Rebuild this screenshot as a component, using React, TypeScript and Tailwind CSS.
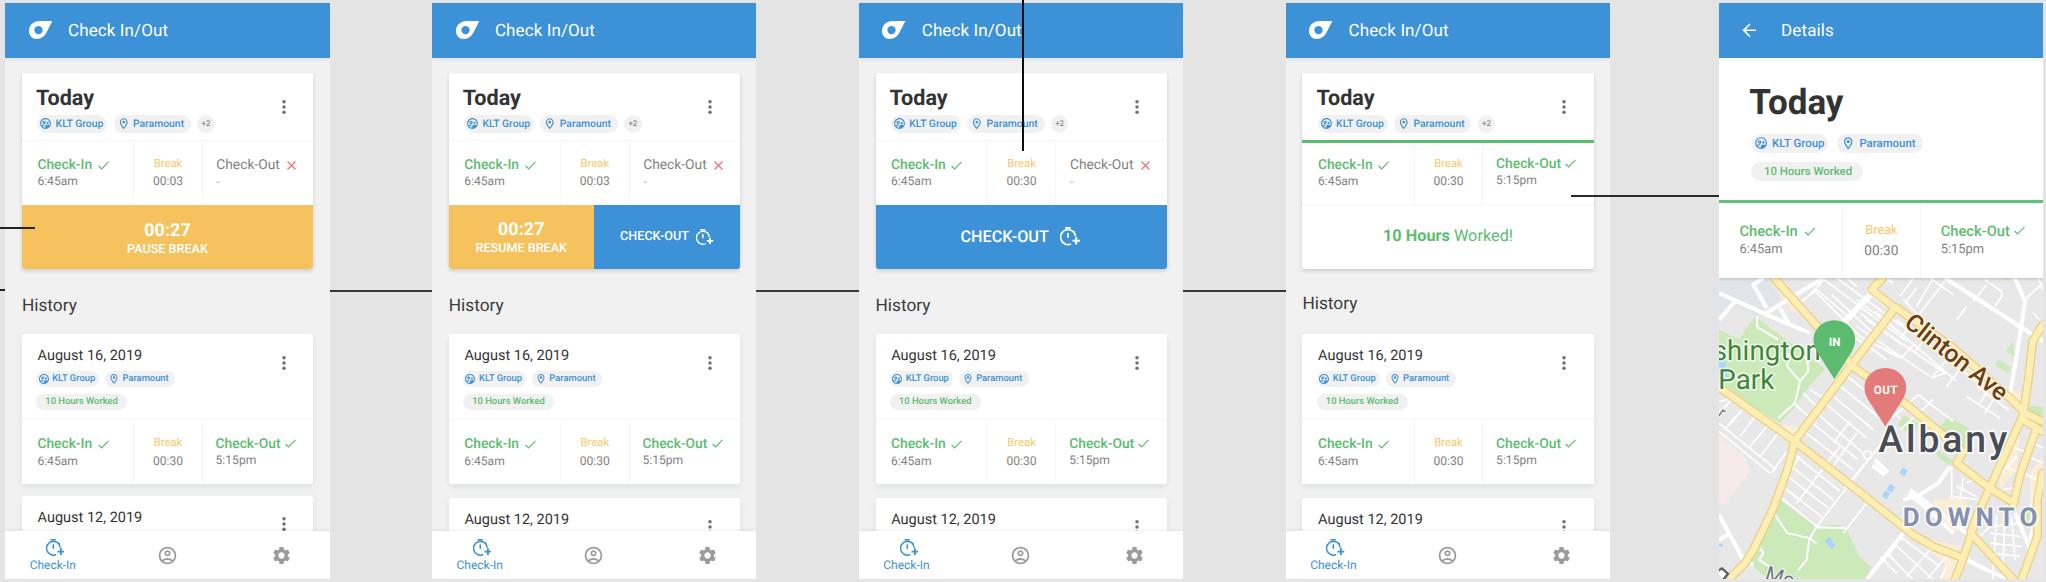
import type { ReactNode } from "react";
import {
  MdArrowBack,
  MdOutlineAccountCircle,
  MdOutlineLocationOn,
  MdOutlineSupervisedUserCircle,
  MdSettings,
} from "react-icons/md";

function Logo() {
  return (
    <svg viewBox="0 0 23.4 18" className="h-[18px] w-[23.4px] shrink-0" fill="white">
      <path
        fillRule="evenodd"
        d="M23.4 0H10.6C4.4 0 0 4.4 0 10c0 4.6 3.2 8 7.9 8 4.2 0 7.4-2.200 9.300-5.900zM9.500 4.900a4.200 4.200 0 1 1 0 8.400 4.200 4.200 0 0 1 0-8.400z"
      />
    </svg>
  );
}

function TimerPlus({ className }: { className: string }) {
  return (
    <svg viewBox="0 0 18.400 17" className={className} fill="none" stroke="currentColor">
      <path d="M4.600 .8h5.200" strokeWidth="1.600" />
      <path d="M14.300 8.600A6.900 6.900 0 1 0 10.200 15.600" strokeWidth="1.600" />
      <path d="M7.300 5.400v4.400" strokeWidth="1.600" />
      <path d="M12.300 3.800l1.200 1.200" strokeWidth="1.500" />
      <path d="M11.500 12.600h6.800M14.900 9.200v6.800" strokeWidth="1.900" />
    </svg>
  );
}

function Tick({ className }: { className: string }) {
  return (
    <svg viewBox="0 0 11 9" className={className} fill="none" stroke="#5dbb70" strokeWidth="1.150">
      <path d="M.6 5l3 3L10.500 .8" />
    </svg>
  );
}

function Cross() {
  return (
    <svg viewBox="0 0 9 9" className="ml-[7.500px] mt-[1.500px] h-[9px] w-[9px]" fill="none" stroke="#e57373" strokeWidth="1.150">
      <path d="M.5 .5l8 8M8.500 .5l-8 8" />
    </svg>
  );
}

function Kebab() {
  return (
    <svg viewBox="0 0 4 16" className="h-4 w-1" fill="#717171">
      <circle cx="2" cy="2.700" r="1.750" />
      <circle cx="2" cy="8" r="1.750" />
      <circle cx="2" cy="13.300" r="1.750" />
    </svg>
  );
}

function Header({ title, children }: { title: string; children: ReactNode }) {
  return (
    <div className="relative z-10 flex h-[55.500px] shrink-0 items-center bg-[#3d91d6] text-white shadow-[0_2px_4px_rgba(0,0,0,0.06)]">
      {children}
      <span className="pt-[1.500px] text-[17px] leading-5 tracking-[0.100px]">{title}</span>
    </div>
  );
}

type ChipSize = "sm" | "md" | "lg";

const chipBox: Record<ChipSize, string> = {
  sm: "h-4 text-[9.400px]",
  md: "h-[17.700px] text-[10.400px]",
  lg: "h-[19px] text-[11.400px]",
};

const groupWidth: Record<ChipSize, string> = { sm: "w-[63px]", md: "w-[69.700px]", lg: "w-[77px]" };
const placeWidth: Record<ChipSize, string> = { sm: "w-[70px]", md: "w-[77.300px]", lg: "w-[85.700px]" };
const groupIcon: Record<ChipSize, string> = {
  sm: "ml-[1.500px] mr-[2.600px] size-[12px]",
  md: "ml-[1.700px] mr-[3.500px] size-[13px]",
  lg: "ml-[2.500px] mr-[4px] size-[14.200px]",
};
const placeIcon: Record<ChipSize, string> = {
  sm: "ml-[3px] mr-[2.400px] size-[12px]",
  md: "ml-[3px] mr-[2.800px] size-[13.500px]",
  lg: "ml-[4.300px] mr-[3.700px] size-[14.500px]",
};

function Chip({ size, className, children }: { size: ChipSize; className: string; children: ReactNode }) {
  return (
    <span className={`flex shrink-0 items-center whitespace-nowrap rounded-full bg-[#f1f1f1] font-medium ${chipBox[size]} ${className}`}>
      {children}
    </span>
  );
}

function Tags({ size, extra, className }: { size: ChipSize; extra?: boolean; className: string }) {
  return (
    <div className={`flex ${className}`}>
      <Chip size={size} className={`text-[#3d91d6] ${groupWidth[size]}`}>
        <MdOutlineSupervisedUserCircle className={groupIcon[size]} />
        KLT Group
      </Chip>
      <Chip size={size} className={`text-[#3d91d6] ${placeWidth[size]}`}>
        <MdOutlineLocationOn className={placeIcon[size]} />
        Paramount
      </Chip>
      {extra && (
        <Chip size={size} className="w-[17.300px] justify-center text-[8px]! text-[#8a8a8a]">
          +2
        </Chip>
      )}
    </div>
  );
}

function CheckRow({
  breakTime,
  done,
  large,
  className,
}: {
  breakTime: string;
  done: boolean;
  large?: boolean;
  className: string;
}) {
  const label = large ? "text-[14.700px]" : "text-[13.800px]";
  const time = large ? "text-[12.900px]" : "text-[12.100px]";
  return (
    <div className={`flex shrink-0 whitespace-nowrap leading-4 text-[#828282] ${className}`}>
      <div className={large ? "w-[123px] pl-[20.600px] pt-[23.300px]" : "w-[111.300px] pl-[15.500px] pt-[17px]"}>
        <div className="flex items-center">
          <span className={`font-medium text-[#5dbb70] ${label}`}>Check-In</span>
          <Tick className={large ? "ml-[6px] h-[9px] w-[12px]" : "ml-[5.500px] mt-px h-[9px] w-[11px]"} />
        </div>
        <div className={large ? `mt-[2.400px] ${time}` : `mt-[0.500px] ${time}`}>6:45am</div>
      </div>
      <div
        className={
          large
            ? "mt-[3px] w-[79px] border-x border-[#f5f5f5] pt-[19.900px] text-center text-[12.800px]"
            : "mt-[3px] w-[69.500px] border-x border-[#f5f5f5] pt-[13.200px] text-center text-[11.300px]"
        }
      >
        <div className="text-[#f6c768]">Break</div>
        <div className={large ? "mt-[4px] text-[13.700px]" : "mt-[1.400px] text-[12.100px]"}>{breakTime}</div>
      </div>
      <div className={large ? "pl-[19.800px] pt-[23.300px]" : done ? "pl-[12.900px] pt-[16.300px]" : "pl-[13.600px] pt-[17px]"}>
        <div className="flex items-center">
          <span className={done ? `font-medium text-[#5dbb70] ${label}` : label}>Check-Out</span>
          {done ? <Tick className="ml-[4.200px] mb-px h-[9px] w-[11px]" /> : <Cross />}
        </div>
        {done ? (
          <div className={large ? `mt-[2.400px] ${time}` : `mt-[0.500px] ${time}`}>5:15pm</div>
        ) : (
          <div className="mt-[2px] text-[12.700px] text-[#b5b5b5]">-</div>
        )}
      </div>
    </div>
  );
}

function TodayCard({ breakTime, done, children }: { breakTime: string; done: boolean; children: ReactNode }) {
  return (
    <div className="mx-[16.500px] mt-[15.200px] flex h-[195.700px] shrink-0 flex-col overflow-hidden rounded-[3px] bg-white shadow-[0_2px_4px_rgba(0,0,0,0.150)]">
      <div className="flex h-[66.300px] shrink-0 justify-between">
        <div className="pl-[14px] pt-[14.200px]">
          <div className="text-[21.600px] font-bold leading-[22px] text-[#333333]">Today</div>
          <Tags size="md" extra className="ml-[1.500px] mt-[5.500px] gap-[6.500px]" />
        </div>
        <div className="mr-[27.500px] mt-[25.200px]">
          <Kebab />
        </div>
      </div>
      <CheckRow
        breakTime={breakTime}
        done={done}
        className={
          done
            ? "h-[65.500px] border-b border-b-[#f3f3f3] shadow-[inset_0_3px_0_#5dbb70]"
            : "h-[65.300px] shadow-[inset_0_1px_0_#f3f3f3]"
        }
      />
      {children}
    </div>
  );
}

function HistoryCard({ date, preview, className }: { date: string; preview?: boolean; className: string }) {
  return (
    <div className={`mx-[16.500px] h-[150px] shrink-0 rounded-[3px] bg-white shadow-[0_3px_7px_rgba(60,100,100,0.100)] ${className}`}>
      <div className="flex h-[85.200px] justify-between">
        <div className="pl-[14.200px] pt-[11.900px]">
          <div className="pl-[1.500px] text-[14.500px] leading-5 text-[#333333]">{date}</div>
          {!preview && (
            <>
              <Tags size="sm" className="mt-[5.400px] gap-[6px]" />
              <Chip size="sm" className="mt-[6.200px] w-[91px] justify-center pt-[0.800px] text-[#5dbb70]">
                10 Hours Worked
              </Chip>
            </>
          )}
        </div>
        <div className="mr-[27.500px] mt-[20.700px]">
          <Kebab />
        </div>
      </div>
      {!preview && <CheckRow breakTime="00:30" done className="h-[64.800px] shadow-[inset_0_1px_0_#f3f3f3]" />}
    </div>
  );
}

function BottomNav() {
  return (
    <div className="relative flex h-[48.700px] shrink-0 items-center bg-white pl-[0.200px] text-[#9b9b9b] shadow-[0_-1px_3px_rgba(0,0,0,0.070)]">
      <div className="flex w-[94.500px] flex-col items-center pt-[2px] text-[#3d91d6]">
        <TimerPlus className="ml-[4.500px] h-[17px] w-[18.400px]" />
        <span className="mt-[0.500px] text-[12px] leading-4">Check-In</span>
      </div>
      <div className="flex w-[134px] justify-center">
        <MdOutlineAccountCircle className="size-[21px]" />
      </div>
      <div className="flex w-[94px] justify-center">
        <MdSettings className="size-[21px]" />
      </div>
    </div>
  );
}

function CheckScreen({
  breakTime,
  done = false,
  className,
  historyClass,
  gapClass,
  children,
}: {
  breakTime: string;
  done?: boolean;
  className: string;
  historyClass: string;
  gapClass: string;
  children: ReactNode;
}) {
  return (
    <section className={`relative flex h-[576.800px] w-[324.200px] shrink-0 flex-col overflow-hidden bg-[#f1f1f1] ${className}`}>
      <Header title="Check In/Out">
        <div className="ml-[23.300px] mr-[16px]">
          <Logo />
        </div>
      </Header>
      <div className="flex min-h-0 flex-1 flex-col overflow-hidden">
        <TodayCard breakTime={breakTime} done={done}>
          {children}
        </TodayCard>
        <h2 className={`h-[65px] shrink-0 pl-[16.500px] text-[17.300px] leading-5 text-[#3c3c3c] ${historyClass}`}>History</h2>
        <HistoryCard date="August 16, 2019" className="" />
        <HistoryCard date="August 12, 2019" preview className={gapClass} />
      </div>
      <BottomNav />
    </section>
  );
}

const parks = [
  "M165 140L375 297L318 362L282 415L240 460L57 345V180L118 208z",
  "M240 690L350 770L410 764L440 780L478 860L512 890L500 929H205L150 880L190 790z",
  "M745 440L812 480L795 530L715 478z",
  "M612 436L655 462L636 500L593 466z",
  "M715 540L760 575L745 586L708 556z",
  "M938 218L945 262L916 244z",
  "M895 270L932 292L925 310L886 286z",
  "M985 408L1028 412V470L980 445z",
  "M960 715L992 722L985 760L962 745z",
  "M905 25H930L918 32z",
].join("");

const thinStreets = [
  "M330 75L372 30M372 30L620 215M345 65L480 200L600 265M395 75L520 190M300 100L350 60L455 150M410 25L640 195M440 25L470 50M480 130L605 225",
  "M540 230L605 265L640 225M455 195L560 270M470 170L690 320M500 150L735 310L695 325M525 125L770 335M555 25L580 40M590 150L860 360M610 90L900 390",
  "M470 90L600 190M500 65L560 112M620 95L650 55M605 200L735 35M640 250L690 190M695 325L740 270M740 350L790 285M840 400L870 350",
  "M600 80L640 25M650 110L700 25M690 25L760 75M855 30L905 65V80L885 110M820 95L860 45M770 150L800 110M740 25L800 70",
  "M975 90L1028 40M1015 25L1028 60M930 150L990 190M1000 130L1028 160",
  "M435 315L600 445M415 345L565 465M393 373L520 480M375 400L500 505M350 430L490 550M330 455L475 570M312 485L460 600",
  "M265 540L420 665M255 575L400 690M250 610L385 715M240 645L365 740M232 675L350 770M330 360L380 390M500 345L560 390",
  "M350 770L560 500M290 700L420 530M240 640L300 560M385 610L470 490M430 790L500 700M435 655L530 540M400 520L450 455M280 400L350 460M310 370L360 420",
  "M57 395L100 385M57 430L100 385L250 505M57 460L230 600M57 485L210 610M95 460L130 415M120 500L165 440M150 530L200 470M180 560L235 490M215 610L260 545M75 480L105 440",
  "M575 445L655 375L760 455M600 480L700 390M855 430L880 390M800 380L900 445M830 350L925 420",
  "M565 860L610 790M540 860L590 910M600 800L720 890M560 850L640 929M620 920L690 840M680 929L740 860M580 820L700 929M720 929L740 890",
  "M755 590V690M770 650L830 680M790 625L780 690M760 680L840 690M840 620L800 640",
  "M890 735L878 929M915 730L908 929M935 740L945 870M870 790L960 800M872 820L965 830M870 850L960 860M880 770L960 760M840 800L880 760",
  "M1000 520L1028 535M985 560L1028 580M970 610L1010 630M895 620L950 560M905 660L960 650M915 590L960 610M1010 640L990 720M930 530L975 545",
].join("");

const mediumStreets = [
  "M57 70L200 135L330 190M370 25L190 135M57 150L110 90M200 115L160 45L190 25M265 160L240 115",
  "M57 735L130 870L160 885M57 810L90 790",
  "M610 790L500 929",
  "M750 590L715 640L665 672L610 690M630 660L800 790M640 680L760 790M625 672L690 720",
  "M800 870L870 905L930 929",
  "M945 730L1000 860",
  "M1015 690L985 850",
  "M945 25L975 95L945 290L930 370",
].join("");

const majorRoads = [
  "M222 25L375 195L455 285",
  "M548 25L515 60L585 115",
  "M585 115L455 285L285 512",
  "M585 112L760 235L930 385L975 430L1028 455",
  "M57 352L285 515L470 660L640 795L700 830L790 865",
  "M285 512L262 600L220 715L160 840L135 880L92 922",
  "M455 288L620 405L790 545L770 580L870 655L942 700",
  "M1028 165L998 215L985 330L968 440L870 652L832 735L790 865L765 929",
  "M1010 475L962 610L940 705",
  "M968 450L1028 485",
  "M1028 610L1012 690L1012 800L965 929",
  "M828 745L812 790L940 929",
].join("");

function CityMap() {
  return (
    <svg viewBox="57 25 972 904" className="block min-h-0 w-full flex-1 bg-[#e8e8e8] font-['Roboto',sans-serif]" preserveAspectRatio="none">
      <path d="M57 25H200L240 90L170 140L110 110L57 150z" fill="#e0e5ea" />
      <path d="M57 495L135 560L152 602L75 705L57 700z" fill="#f5ebeb" />
      <path
        d="M225 50L255 40L305 110L280 130zM250 465L300 470L310 500L250 505zM700 690L790 680L820 740L760 790L700 730zM660 800L780 830L760 929H720L735 880L660 820zM900 560L960 480L950 600L900 660zM990 610L1028 560V690H990zM930 360L975 370L960 410z"
        fill="#fbeed9"
      />
      <path d={parks} fill="#cbe9b9" />
      <path d="M57 260L75 275L85 330L57 310zM375 812L388 800L408 826L394 838zM598 610L608 593L623 602L612 620zM560 660L570 642L586 652L575 670zM545 680L556 662L571 672L560 688zM57 822H68V830H57z" fill="#abd6fb" />
      <g fill="none" stroke="#fff" strokeLinejoin="round">
        <path d={thinStreets} strokeWidth="5" />
        <path d="M170 140L172 172L235 210M265 250L262 290L300 335L325 305L322 270L300 250M300 335L285 400L235 445M225 735L262 790L330 805L350 822M350 770L328 808L320 870L295 900M180 835L190 850L178 870L215 895M350 772L435 775" strokeWidth="6" />
        <path d={mediumStreets} strokeWidth="12" />
        <path d="M735 25L1028 215" strokeWidth="13" />
        <path d="M515 70L430 160" strokeWidth="17" />
        <path d="M528 574L560 604M522 590L550 612" strokeWidth="13" strokeLinecap="round" />
        <circle cx="503" cy="556" r="12" strokeWidth="5" />
      </g>
      <g fill="none" strokeLinejoin="round" strokeLinecap="round">
        <path d={majorRoads} stroke="#ecd081" strokeWidth="27" />
        <path d={majorRoads} stroke="#fdeeb6" strokeWidth="19" />
      </g>
      <g strokeLinejoin="round" paintOrder="stroke">
        <g fill="#3d8638" stroke="#ffffffcc" strokeWidth="9" fontSize="83">
          <text x="38" y="270" textLength="324">shington</text>
          <text x="55" y="357" textLength="168">Park</text>
        </g>
        <text transform="translate(609 167) rotate(38.300)" textLength="370" fontSize="74" fontWeight="500" fill="#6a3d16" stroke="#fff6dd" strokeWidth="8">
          Clinton Ave
        </text>
        <text x="535" y="548" textLength="387" fontSize="112" fontWeight="500" fill="#484d57" stroke="#ffffffdd" strokeWidth="11">
          Albany
        </text>
        <text x="608" y="768" textLength="404" fontSize="78" fontWeight="700" fill="#8592ad" stroke="#ffffffdd" strokeWidth="9">
          DOWNTO
        </text>
        <text transform="translate(192 929) rotate(17)" fontSize="62" fill="#6d7480" stroke="#ffffffdd" strokeWidth="7">
          Mou
        </text>
        <text transform="translate(52 436) rotate(35)" fontSize="46" fill="#6d7480" stroke="#ffffffdd" strokeWidth="6">
          r
        </text>
      </g>
      <path d="M50 905L66 896L84 912L70 929" fill="#fff" stroke="#5c5f66" strokeWidth="7" />
      <g fontSize="35" fontWeight="700" textAnchor="middle">
        <path d="M403 328L351 246C322 197 358 152 403 152S484 197 455 246z" fill="#5dbb70" />
        <text x="404" y="230" fill="#fff">IN</text>
        <path d="M556 470L504 389C475 340 511 295 556 295S637 340 608 389z" fill="#e27b79" />
        <text x="557" y="373" fill="#fff" textLength="71">OUT</text>
      </g>
    </svg>
  );
}

function DetailsScreen() {
  return (
    <section className="relative ml-[108.800px] flex h-[576.800px] w-[324px] shrink-0 flex-col overflow-hidden bg-white">
      <Header title="Details">
        <MdArrowBack className="ml-[20px] mr-[21.700px] size-[20.500px]" />
      </Header>
      <div className="h-[141.800px] shrink-0 pl-[30.300px] pt-[27px]">
        <div className="text-[35px] font-bold leading-9 text-[#333333]">Today</div>
        <Tags size="lg" className="ml-[2.200px] mt-[12.800px] gap-[8.500px]" />
        <Chip size="lg" className="ml-[2.200px] mt-[9px] w-[111.300px] justify-center pl-[2px] text-[#5dbb70]">
          10 Hours Worked
        </Chip>
      </div>
      <CheckRow
        breakTime="00:30"
        done
        large
        className="relative h-[78px] bg-white shadow-[inset_0_3px_0_#62c078,0_1px_3px_rgba(0,0,0,0.200)]"
      />
      <CityMap />
    </section>
  );
}

const actionLabel = "flex items-center justify-center font-medium text-white";

export default function App() {
  return (
    <main className="relative flex h-[582px] w-[2046px] overflow-hidden bg-[#e4e4e4] pt-[2.700px] font-['Roboto',sans-serif] [text-rendering:geometricPrecision]">
      <div className="absolute left-[330px] top-[290px] h-[2px] w-[957px] bg-[#3a3a3a]" />
      <div className="absolute left-0 top-[289px] h-[1.500px] w-[5px] bg-[#222222]" />

      <CheckScreen breakTime="00:03" className="ml-[5.400px]" historyClass="pt-[27px]" gapClass="mt-[11.700px]">
        <div className="flex flex-1 flex-col items-center bg-[#f5c25e] pt-[16.300px] font-medium text-white">
          <div className="text-[17.800px] font-bold leading-5 tracking-[0.150px]">00:27</div>
          <div className="mt-[0.500px] text-[12.600px] leading-4">PAUSE BREAK</div>
        </div>
      </CheckScreen>

      <CheckScreen breakTime="00:03" className="ml-[102.700px]" historyClass="pt-[27px]" gapClass="mt-[14.300px]">
        <div className="flex flex-1">
          <div className="flex w-[145px] flex-col items-center bg-[#f5c25e] pt-[15.400px] font-medium text-white">
            <div className="text-[17.800px] font-bold leading-5 tracking-[0.150px]">00:27</div>
            <div className="mt-[0.600px] text-[12.600px] leading-4">RESUME BREAK</div>
          </div>
          <div className={`${actionLabel} flex-1 gap-[7.500px] bg-[#3d91d6] text-[12.600px]`}>
            CHECK-OUT
            <TimerPlus className="mb-[1px] h-[16px] w-[17.300px]" />
          </div>
        </div>
      </CheckScreen>

      <CheckScreen breakTime="00:30" className="ml-[102.600px]" historyClass="pt-[27px]" gapClass="mt-[14.300px]">
        <div className={`${actionLabel} flex-1 gap-[11px] bg-[#3d91d6] pr-[2px] text-[16.200px]`}>
          CHECK-OUT
          <TimerPlus className="mb-[1px] h-[18.500px] w-[20px]" />
        </div>
      </CheckScreen>

      <CheckScreen breakTime="00:30" done className="ml-[102.700px]" historyClass="pt-[24.700px]" gapClass="mt-[14.300px]">
        <div className="flex flex-1 items-center justify-center pb-[1px] text-[16.300px] text-[#5dbb70]">
          <span>
            <strong className="font-bold">10 Hours</strong> Worked!
          </span>
        </div>
      </CheckScreen>

      <DetailsScreen />

      <div className="absolute left-0 top-[227px] h-[2px] w-[35px] bg-[#222222]" />
      <div className="absolute left-[1022px] top-0 z-20 h-[151px] w-[2px] bg-[#0c0c0c]" />
      <div className="absolute left-[1571px] top-[194.500px] h-[2px] w-[148px] bg-[#2a2a2a]" />
    </main>
  );
}
